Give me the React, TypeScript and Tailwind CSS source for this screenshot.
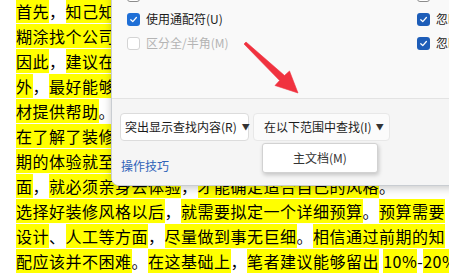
import React from "react";

const PUNCT = new Set(["，", "。", "、", " ", "-", "↵"]);

function HlLine({ text }: { text: string }) {
  const runs: { t: string; hl: boolean }[] = [];
  for (const ch of Array.from(text)) {
    const hl = !PUNCT.has(ch);
    const last = runs[runs.length - 1];
    if (last && last.hl === hl) last.t += ch;
    else runs.push({ t: ch, hl });
  }
  return (
    <div className="h-[25px] leading-[25px] whitespace-nowrap overflow-hidden">
      {runs.map((r, i) => (
        <span key={i} className={r.hl ? "bg-[#ffff00]" : ""}>
          {r.t}
        </span>
      ))}
    </div>
  );
}

const lines = [
  "首先，知己知彼，百战不殆。装修之前要做好准备，不要",
  "糊涂找个公司就草草开工，以免后期出现问题。",
  "因此，建议在装修前多了解一些装修知识，此",
  "外，最好能够多参考一些装修案例，为自己选",
  "材提供帮助。",
  "在了解了装修的基本知识以后，对于装修后",
  "期的体验就至关重要了，想要确定装修风格方",
  "面，就必须亲身去体验，才能确定适合自己的风格。",
  "选择好装修风格以后，就需要拟定一个详细预算。预算需要",
  "设计、人工等方面，尽量做到事无巨细。相信通过前期的知",
  "配应该并不困难。在这基础上，笔者建议能够留出 10%-20%",
];

function Check({ state, dark }: { state: "on" | "off" | "disabled"; dark?: boolean }) {
  if (state === "on") {
    return (
      <span
        className={`flex shrink-0 items-center justify-center w-[13px] h-[13px] rounded-[3px] ${
          dark ? "bg-[#1d5db8]" : "bg-[#1f6fd6]"
        }`}
      >
        <svg width="9" height="9" viewBox="0 0 10 10">
          <path d="M2 5.2 L4.2 7.4 L8.2 2.8" fill="none" stroke="#fff" strokeWidth="1.4" strokeLinecap="round" strokeLinejoin="round" />
        </svg>
      </span>
    );
  }
  return (
    <span
      className={`block shrink-0 w-[13px] h-[13px] rounded-[3px] bg-white border ${
        state === "disabled" ? "border-[#d4d4d4]" : "border-[#8c8c8c]"
      }`}
    />
  );
}

function Row({
  state,
  label,
  dark,
  top,
}: {
  state: "on" | "off" | "disabled";
  label: string;
  dark?: boolean;
  top?: boolean;
}) {
  return (
    <div className="h-[24px] flex items-center gap-[6px] whitespace-nowrap">
      <Check state={state} dark={dark} />
      <span
        className={`${state === "disabled" ? "text-[#b4b4b4]" : "text-[#1b1b1b]"} ${
          top ? "-mt-[12px]" : ""
        }`}
      >
        {label}
      </span>
    </div>
  );
}

export default function App() {
  return (
    <div
      className="relative w-[449px] h-[275px] overflow-hidden bg-white text-black"
      style={{ fontFamily: '"Noto Sans CJK SC", "Noto Sans", sans-serif' }}
    >
      {/* document */}
      <div className="pl-[16px] mt-[-1px] text-[16px] tracking-[0.5px]">
        {lines.map((l, i) => (
          <HlLine key={i} text={l} />
        ))}
      </div>

      {/* dialog */}
      <div className="absolute left-[111px] top-[-30px] w-[420px] h-[216px] rounded-[8px] border border-[#c9cdd2] bg-[#f9f9f9] shadow-[0_2px_8px_rgba(0,0,0,0.22)] text-[12px] flex flex-col">
        <div className="h-[128px] pt-[12px] pl-[15px] flex border-b border-[#e3e3e3]">
          <div className="w-[290px] shrink-0 flex flex-col">
            <Row state="off" top label="区分大小写(C)" />
            <Row state="on" label="使用通配符(U)" />
            <Row state="disabled" label="区分全/半角(M)" />
          </div>
          <div className="flex flex-col">
            <Row state="off" top label="区分后缀(T)" />
            <Row state="on" dark label="忽略标点符号(S)" />
            <Row state="on" dark label="忽略空格(W)" />
          </div>
        </div>
        <div className="flex-1 bg-[#f5f5f5] rounded-b-[8px] pl-[8px] pt-[14px] flex flex-col">
          <div className="flex gap-[4px]">
            <div className="h-[28px] w-[129px] flex items-center pl-[4px] gap-[5px] rounded-[4px] bg-white border border-[#dcdcdc] text-[#1b1b1b] whitespace-nowrap">
              <span>突出显示查找内容(R)</span>
              <span className="text-[8px] text-[#333]">▼</span>
            </div>
            <div className="relative h-[28px] w-[137px] flex items-center pl-[10px] gap-[4px] rounded-[4px] bg-[#fbfbfb] border border-[#e8e8e8] text-[#1b1b1b] whitespace-nowrap">
              <span>在以下范围中查找(I)</span>
              <span className="text-[8px] text-[#333]">▼</span>
              <div className="absolute left-[8px] top-[29px] w-[116px] h-[30px] flex items-center justify-center bg-white border border-[#d2d2d2] rounded-[3px] shadow-[1px_2px_4px_rgba(0,0,0,0.2)] text-[#333]">
                主文档(M)
              </div>
            </div>
          </div>
          <div className="mt-[16px] pl-[1px] text-[#2f63b8] leading-[17px]">操作技巧</div>
        </div>
      </div>

      {/* red arrow */}
      <svg className="absolute left-0 top-0 pointer-events-none" width="449" height="275" viewBox="0 0 449 275">
        <polygon
          points="244,44 246,42 284.5,75.5 289.5,71 298,93 275,85.5 279.6,80.5"
          fill="#f0323f"
          stroke="#f0323f"
          strokeWidth="0.6"
          strokeLinejoin="round"
        />
      </svg>
    </div>
  );
}
